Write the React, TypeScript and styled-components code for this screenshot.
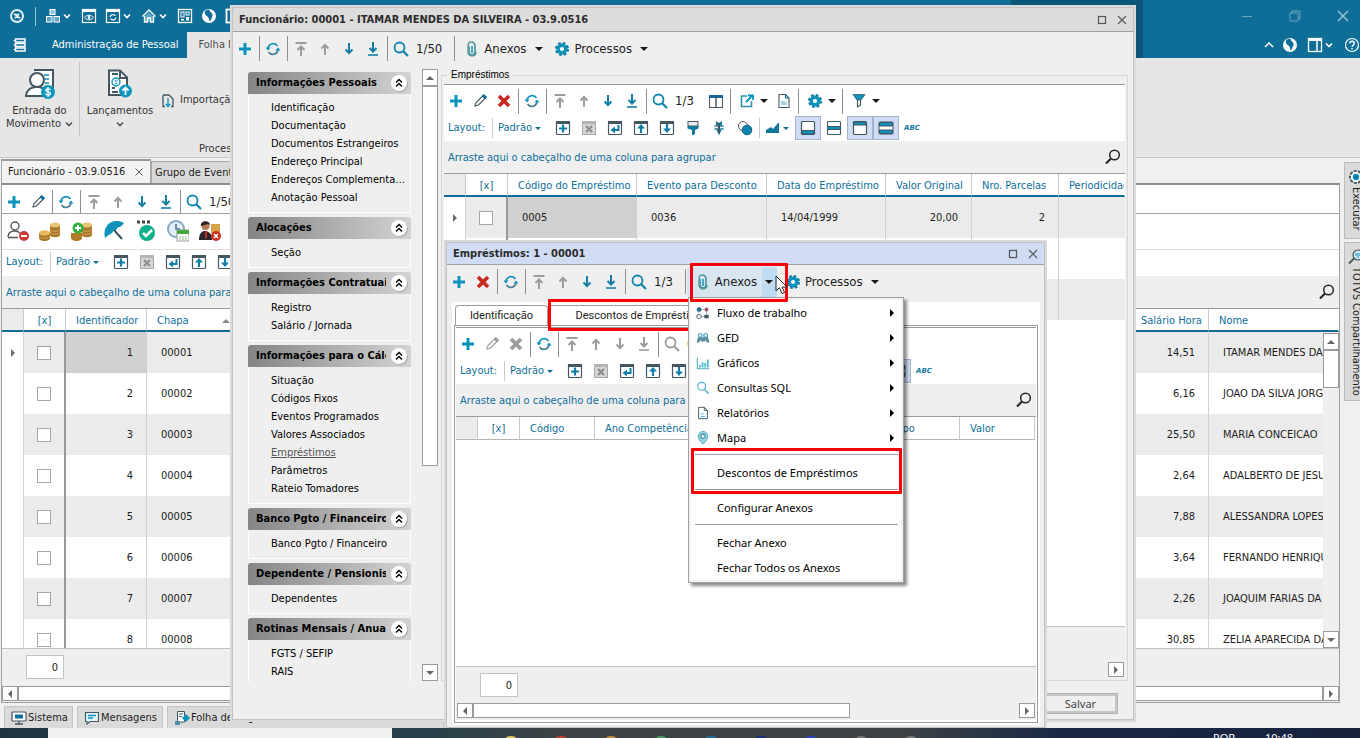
import React, { ReactNode } from 'react';
import styled, { createGlobalStyle, css } from 'styled-components';

const ui = '"DejaVu Sans Condensed", Tahoma, "Noto Sans", sans-serif';
const segoe = '"Noto Sans", "Open Sans", sans-serif';
const sans = '"Liberation Sans", Arial, sans-serif';
const blue = '#0e6e98';
const teal = '#0c93bd';
const slate = '#44565f';
const mute = '#9c9c9c';

const Global = createGlobalStyle`
  *, *::before, *::after { box-sizing: border-box; }
  html, body { margin: 0; padding: 0; }
  body { font: 11px/16px ${ui}; color: #1c1c1c; background: #f0f0f0; overflow: hidden; }
  button { font: inherit; color: inherit; background: none; border: 0; padding: 0; margin: 0; }
  ul { list-style: none; margin: 0; padding: 0; }
  svg { display: block; flex: none; }
`;

/* ---------- icons ---------- */

const P = ({ d, c = slate, w = 1.5, f = 'none' }: { d: string; c?: string; w?: number; f?: string }) => (
  <path d={d} stroke={c} strokeWidth={w} fill={f} />
);
const frame = <rect x="1.5" y="1.5" width="13" height="13" rx="1" fill="#fff" stroke={slate} strokeWidth="1.2" />;
const frameTop = <path d="M1 1h14v3H1z" fill={slate} />;

const down = (c: string) => <P d="M8 2v10M4.5 8.500L8 12l3.500-3.500" c={c} w={2} />;
const up = (c: string) => <P d="M8 14V4M4.500 7.500L8 4l3.500 3.500" c={c} w={2} />;

const drawings: Record<string, ReactNode> = {
  plus: <P d="M8 2v12M2 8h12" c={teal} w={3} />,
  pencil: <><P d="M3 13l1-3.500 6.500-6.500 2.500 2.500L6.500 12z" w={1.1} f="#fff" /><P d="M10 3l2-1.500 2.500 2.500-1.500 2z" c={blue} w={1} f={blue} /></>,
  pencilOff: <><P d="M3 13l1-3.500 6.500-6.500 2.500 2.500L6.500 12z" c={mute} w={1.2} /><P d="M10 3l2-1.500 2.500 2.500-1.500 2z" c={mute} w={1} f={mute} /></>,
  del: <P d="M3 3l10 10M13 3L3 13" c="#c8281e" w={3.600} />,
  delOff: <P d="M3 3l10 10M13 3L3 13" c={mute} w={3.600} />,
  refresh: <><P d="M3 7a5.200 5.200 0 0 1 9.500-2" c={teal} w={1.600} /><P d="M13 9a5.200 5.200 0 0 1-9.500 2" c="#4d7f90" w={1.600} /><path d="M.5 6.500h5L3 9.500zM10.500 9.500h5L13 6.500z" fill={teal} /></>,
  first: <><P d="M2.500 2h11" c={mute} w={2} /><P d="M8 15V5.500M4.500 9L8 5.500 11.500 9" c={mute} w={2} /></>,
  up: up(mute),
  down: down('#137fa6'),
  last: <><P d="M8 1v9M4.500 7L8 10.500 11.500 7" c="#137fa6" w={2} /><P d="M3 14h10" c="#137fa6" w={1.600} /></>,
  downOff: down(mute),
  lastOff: <><P d="M8 1v9M4.500 7L8 10.500 11.500 7" c={mute} w={2} /><P d="M3 14h10" c={mute} w={1.600} /></>,
  search: <><circle cx="6.500" cy="6.500" r="5" fill="none" stroke="#0f86ad" strokeWidth="1.800" /><P d="M10 10l5 5" c="#0f86ad" w={2.200} /></>,
  searchOff: <><circle cx="6.500" cy="6.500" r="5" fill="none" stroke={mute} strokeWidth="1.800" /><P d="M10 10l5 5" c={mute} w={2.200} /></>,
  columns: <><rect x="1.500" y="2.500" width="13" height="12" fill="#fff" stroke={slate} /><path d="M1 2h14v3H1z" fill={blue} /><P d="M8 2v12" w={1.400} /></>,
  export: <><P d="M8 3H2.500v10.500h10V8" c="#2f93a8" w={1.600} /><P d="M7 9l6-6M9 2.500h5V7" c={teal} w={1.800} /></>,
  report: <><P d="M3 1.500h6.500L13 5v9.500H3z" w={1.100} f="#fff" /><P d="M9.500 1.500V5H13" c={blue} w={1.100} /><path d="M5 8h4v1h2v3H5z" fill="#a5d3de" /></>,
  gear: <><circle cx="8" cy="8" r="3.800" fill="none" stroke={teal} strokeWidth="3.400" /><circle cx="8" cy="8" r="6" fill="none" stroke="#1580a5" strokeWidth="2.200" strokeDasharray="2.700 2.010" /><circle cx="8" cy="8" r="1.400" fill="#fff" /></>,
  filter: <><path d="M2 1.500h12L10 7H6z" fill={teal} stroke={slate} strokeWidth=".8" /><P d="M6.500 7v7l3-2V7" w={1.200} /></>,
  clip: <><P d="M5 5v6a3 3 0 0 0 6 0V4.500a3.500 3.500 0 0 0-3.500-3.500" c="#3d8b94" w={1.500} /><P d="M7.500 1C5 1 4 3 4 5v6a4 4 0 0 0 4 4c3 0 4-2 4-4" c="#4b9a94" w={1.300} /><P d="M8 5v7" c={teal} w={1.500} /></>,
  layAdd: <>{frame}{frameTop}<P d="M8 4.500v8M4 8.500h8" c="#0f7fa8" w={2.200} /></>,
  layDel: <><rect x="1.500" y="1.500" width="13" height="13" fill="#d6d6d6" stroke="#a6a6a6" /><path d="M1 1h14v3H1z" fill="#b5b5b5" /><P d="M5 6l6 6M11 6l-6 6" c="#8c8c8c" w={2.200} /></>,
  layBack: <>{frame}{frameTop}<P d="M11.500 5v5H6" c="#0f7fa8" w={2} /><path d="M8 6.500v7L3.500 10z" fill="#0f7fa8" /></>,
  layUp: <>{frame}{frameTop}<P d="M8 13V6" c="#0f7fa8" w={2.200} /><path d="M4 8.500L8 4l4 4.500z" fill="#0f7fa8" /></>,
  layDown: <>{frame}{frameTop}<P d="M8 4v6" c="#0f7fa8" w={2.200} /><path d="M4 8.500L8 13l4-4.500z" fill="#0f7fa8" /></>,
  brush: <><rect x="3" y="1.500" width="10" height="4.500" fill="#eee" stroke={slate} /><path d="M2.500 6h11v2.500l-3.500 1.500v4l-3 1.500V10L2.500 8.500z" fill="#12799b" /></>,
  fit: <><path d="M5 1l3 2 3-2v4H5zM5.500 10h5L8 15.500z" fill="#12799b" /><P d="M3.500 6h9M3.500 9h9" c="#12799b" w={1.400} /><P d="M8 3v10" w={2} /></>,
  circles: <><circle cx="6" cy="6" r="4.500" fill="#fff" stroke={slate} /><circle cx="10" cy="10" r="4.800" fill="#0f84ad" stroke="#12627d" /></>,
  chart: <path d="M1 13V10l5-3 2 2 5-6h1v10z" fill="#12799b" />,
  viewFoot: <>{frame}<path d="M2 10.500h12V14H2z" fill={teal} stroke={slate} /></>,
  viewMid: <>{frame}<path d="M1.500 6.500h13v3h-13z" fill={teal} stroke={slate} /></>,
  viewHead: <>{frame}<path d="M2 2h12v3H2z" fill={teal} stroke={slate} /></>,
  viewBoth: <><rect x="1" y="2" width="14" height="12" rx="1" fill="#fff" stroke={slate} /><path d="M1.500 2.500h13v3.500h-13zM1.500 10h13v3.500h-13z" fill={teal} stroke={slate} /></>,
  magnifier: <><circle cx="9.500" cy="6" r="4.800" fill="none" stroke="#262626" strokeWidth="1.500" /><P d="M6 9.500l-5 5" c="#262626" w={2.200} /></>,
  flow: <><P d="M3 5v7h9V5M5 4h6" c="#a5b3b9" w={1} /><circle cx="3.500" cy="4" r="2.700" fill="#2a6d8a" /><circle cx="12" cy="4" r="2.200" fill="#9c5563" /><rect x="1" y="10" width="5" height="4" rx="1" fill="#fff" stroke={slate} /><rect x="9.500" y="10" width="5" height="4" fill={slate} /></>,
  people: <><path d="M1 13c0-5 2-7 4-7 1.500 0 2.500 1 3 2 .5-1 1.500-2 3-2 2 0 4 2 4 7h-3l-.7-3-1 2H5.700l-1-2L4 13z" fill="#5f8d9c" /><circle cx="5" cy="5" r="2.200" fill="#e2f4f9" stroke="#3fa2bd" strokeWidth="1.200" /><circle cx="11" cy="5" r="2.200" fill="#e2f4f9" stroke="#3fa2bd" strokeWidth="1.200" /></>,
  bars: <><P d="M1.500 2v12.500H15" c="#58a9bd" w={1.200} /><P d="M4.500 10v3M7.500 7v6M10.500 8v5M13.500 4v9" c="#4ebcd6" w={2} /></>,
  find: <><circle cx="6.500" cy="6" r="4.500" fill="none" stroke="#45b2cf" strokeWidth="1.300" /><P d="M9.500 9.500l5 5" c="#45b2cf" w={1.600} /></>,
  sheet: <><P d="M3 1.500h6.500L13 5v9.500H3z" w={1.100} f="#fff" /><P d="M9.500 1.500V5H13" w={1.100} /><P d="M5.500 9h3M5.500 12h5" c="#55bfe0" w={1.300} /></>,
  pin: <><path d="M8 15C4 11 2.500 9 2.500 6a5.500 5.500 0 0 1 11 0c0 3-1.500 5-5.500 9z" fill="#9bd3de" stroke="#4ba9bf" /><circle cx="8" cy="6" r="2.500" fill="#fff" stroke="#3793ad" strokeWidth="1.300" /></>,
  /* white icons of the caption area */
  swirl: <><circle cx="8" cy="8" r="6" fill="none" stroke="#dceef5" strokeWidth="2" /><P d="M5 6l3 1.500 2-1.500M6 10l2-1.500 3 1.500" c="#fff" w={1.800} /></>,
  cubes: <><rect x="5" y="1.500" width="5" height="5" fill="#8fc4d8" stroke="#fff" /><rect x="1.500" y="8.500" width="5.500" height="5.500" fill="#5aa8c4" stroke="#fff" /><rect x="9" y="8.500" width="5.500" height="5.500" fill="#5aa8c4" stroke="#fff" /></>,
  winEye: <><rect x="1.500" y="1.500" width="13" height="13" fill="none" stroke="#fff" strokeWidth="1.200" /><path d="M1 1h14v3H1z" fill="#fff" /><P d="M3.500 9.500c2-3 7-3 9 0-2 3-7 3-9 0z" c="#fff" w={1} /><circle cx="8" cy="9.500" r="1.400" fill="#fff" /></>,
  winRef: <><rect x="1.500" y="1.500" width="13" height="13" fill="none" stroke="#fff" strokeWidth="1.200" /><path d="M1 1h14v3H1z" fill="#fff" /><P d="M5 9a3 3 0 0 1 5.500-1M11 9.500a3 3 0 0 1-5.500 1" c="#fff" w={1.300} /></>,
  home: <><path d="M4 8v6h8V8L8 4z" fill="#5aa8c4" /><P d="M1.500 8.500L8 2l6.500 6.500M3.500 8V14h3v-4h3v4h3V8" c="#fff" w={1.300} /></>,
  tiles: <><rect x="1.500" y="1.500" width="13" height="13" fill="none" stroke="#fff" strokeWidth="1.300" /><rect x="4" y="4" width="3" height="5" fill="none" stroke="#fff" /><rect x="9" y="4" width="3" height="3" fill="none" stroke="#fff" /><rect x="4" y="11" width="3" height="1.500" fill="#fff" /><rect x="9" y="9" width="3" height="3.500" fill="#fff" /></>,
  globe: <><circle cx="8" cy="8" r="7" fill="#fff" /><path d="M4 3.500C5 2 7 1.500 8.500 2c0 2 2.500 2.500 3 4.500S10 11 9 13.500c-1.500-1-.5-3-2-4.500S3 6.500 4 3.500z" fill={blue} /></>,
  winCfg: <rect x="1.500" y="1.500" width="13" height="13" fill="none" stroke="#fff" strokeWidth="1.800" />,
  stack: <><rect x="3.500" y="2" width="9.500" height="3" fill="none" stroke="#fff" strokeWidth="1.500" /><rect x="3.500" y="6.500" width="9.500" height="3" fill="none" stroke="#fff" strokeWidth="1.500" /><rect x="3.500" y="11" width="9.500" height="3" fill="none" stroke="#fff" strokeWidth="1.500" /><P d="M1.500 3.500H4M1.500 8H4M1.500 12.500H4" c="#fff" w={1.200} /></>,
  collapse: <P d="M4 10l4-4 4 4" c="#fff" w={1.500} />,
  panel: <><rect x="1.500" y="1.500" width="13" height="13" fill="none" stroke="#fff" strokeWidth="1.300" /><path d="M1 1h14v3H1z" fill="#fff" /><path d="M10 4v10" stroke="#fff" strokeWidth="1.500" /></>,
  help: <><circle cx="8" cy="8" r="6.500" fill="none" stroke="#fff" strokeWidth="1.200" /><P d="M5.800 6.500c0-3 4.500-3 4.500 0 0 1.500-2.200 1.500-2.200 3.500M8 11v1.500" c="#fff" w={1.400} /></>,
  winMin: <P d="M3 8.500h10" c="#6ba6be" w={1} />,
  winRestore: <><P d="M5 5V3h8v8h-2" c="#6ba6be" w={1} /><P d="M3 5h8v8H3z" c="#6ba6be" w={1} /></>,
  winClose: <P d="M3 3l10 10M13 3L3 13" c="#a9cbd9" w={1.200} />,
  boxMax: <rect x="4.500" y="4.500" width="7" height="7" fill="none" stroke="#555" strokeWidth="1.200" />,
  boxClose: <P d="M4 4l8 8M12 4l-8 8" c="#555" w={1.100} />,
  importar: <><P d="M3 3v11.500h2M3 3h6l4 4v7.500h-2" w={1.300} /><P d="M8 6v8M5.800 12L8 14.500l2.200-2.500" c={teal} w={1.300} /></>,
  /* bottom and side tabs */
  monitor: <><rect x="1" y="2" width="14" height="9" rx="1" fill="#fff" stroke={slate} strokeWidth="1.200" /><path d="M4 4.500h8v4H4z" fill={blue} /><P d="M8 11v3M4 14h8" w={1.300} /></>,
  message: <><P d="M1.500 2.500h13v9H6L3 14v-2.500H1.500z" f="#dff2f8" w={1.100} /><P d="M4 5.500h8M4 8h5" c={teal} w={1.300} /></>,
  payroll: <><P d="M3.500 1.500h7V12h-7z" f="#fff" w={1} /><P d="M5 4h4M5 6.500h3" w={1} /><path d="M12 4l4 4-4 4-4-4z" fill={teal} /><path d="M1 11h5v4H1z" fill="#4d93a8" /></>,
  exec: <><circle cx="8" cy="8" r="6" fill="#fff" stroke={slate} strokeWidth="2" strokeDasharray="3 1.200" /><circle cx="8" cy="8" r="2.500" fill={blue} stroke={teal} strokeWidth="1.500" /></>,
  share: <><circle cx="10" cy="6" r="5" fill="#cfeaf3" stroke={slate} strokeWidth="1.200" /><P d="M6 9.500l-5 5" w={1.800} /><P d="M8 4v3M10 4v5M12 4v3" c={teal} w={1} /></>,
};

const Icon = ({ name, size = 16 }: { name: string; size?: number }) => (
  <svg width={size} height={size} viewBox="0 0 16 16" aria-hidden="true">{drawings[name]}</svg>
);

const Caret = styled.span<{ $tone?: string }>`
  width: 0; height: 0; flex: none;
  border: 4px solid transparent; border-bottom-width: 0;
  border-top-color: ${p => p.$tone || '#1a1a1a'};
`;
const SmallCaret = styled(Caret)`border-width: 3px 3px 0;`;
const Chevron = ({ color = '#fff' }: { color?: string }) => (
  <svg width="8" height="8" viewBox="0 0 8 8" aria-hidden="true"><path d="M1 2.500l3 3 3-3" stroke={color} strokeWidth="1.600" fill="none" /></svg>
);

/* ---------- application frame ---------- */

const Desktop = styled.div`
  position: relative; height: 100vh; overflow: hidden;
  display: flex; flex-direction: column; background: #f0f0f0;
`;
const Header = styled.header`
  flex: none; color: #fff;
  background: linear-gradient(to right, ${blue} calc(100% - 349px), #0b5677 calc(100% - 349px), #0b5677 calc(100% - 217px), ${blue} calc(100% - 217px));
`;
const QuickBar = styled.div`display: flex; align-items: center; height: 32px; padding: 0 9px;`;
const Quick = styled.button`
  display: flex; align-items: center; justify-content: center; width: 24px; height: 24px; flex: none;
`;
const QuickMenu = styled(Quick)`justify-content: flex-start; gap: 2px; width: 36px; padding-left: 4px;`;
const Logo = styled(Quick)`width: 16px;`;
const QuickLine = styled.span`width: 1px; height: 19px; margin: 0 5px 0 10px; background: #9cc4d4;`;
const Spacer = styled.span`flex: 1;`;
const Caption = styled(Quick)`width: 48px;`;
const CaptionSet = styled.div`display: flex; margin-right: -16px;`;
const RibbonTabs = styled.nav`display: flex; align-items: center; height: 26px; padding-left: 12px;`;
const AppMenu = styled(Logo)`margin-right: 12px;`;
const RibbonTab = styled.button<{ $on?: boolean }>`
  height: 26px; padding: 0 8px 0 12px; white-space: nowrap;
  ${p => p.$on && css`background: #e6e6e6; color: #4d4d4d;`}
`;
const TabTools = styled.div`display: flex; gap: 5px; align-items: center;`;

const Ribbon = styled.section`
  display: flex; flex: none; height: 100px; background: #e6e6e6; border-bottom: 1px solid #c8c8c8; color: #333;
`;
const RibbonGroup = styled.div`display: flex; padding-top: 4px; height: 80px;`;
const RibbonButton = styled.button<{ $w: number }>`
  display: flex; flex-direction: column; align-items: center; width: ${p => p.$w}px;
  line-height: 13px; padding-top: 6px;
  svg + span { margin-top: 4px; }
`;
const Inline = styled.span`display: flex; gap: 4px; align-items: center; height: 13px;`;
const RibbonLine = styled.span`width: 1px; height: 74px; background: #c4c4c4; margin-top: 4px;`;
const RibbonMore = styled.div`
  display: flex; flex-direction: column; justify-content: space-between; padding: 34px 0 0 0; height: 99px;
`;
const RibbonItem = styled.button`display: flex; gap: 4px; align-items: center; height: 16px;`;
const RibbonLabel = styled.span`padding-left: 39px;`;

const Workspace = styled.main`flex: 1; min-height: 0; display: flex; gap: 4px; padding-left: 1px;`;
const DocArea = styled.section`flex: 1; min-width: 0; display: flex; flex-direction: column;`;
const DocTabs = styled.div`display: flex; align-items: flex-end; height: 25px; flex: none;`;
const DocTab = styled.button<{ $on?: boolean }>`
  display: flex; align-items: center; gap: 7px; white-space: nowrap; height: ${p => (p.$on ? 24 : 22)}px;
  padding: 0 3px; border: 1px solid #a8a8a8; border-bottom: 0; background: ${p => (p.$on ? '#f2f2f2' : '#d9d9d9')};
  ${p => p.$on && css`width: 150px; padding-left: 6px; border-top: 2px solid #999;`}
`;
const DocPanel = styled.div`
  flex: 1; min-height: 0; display: flex; flex-direction: column;
  border: 1px solid #a0a0a0; border-top: 2px solid #8c8c8c;
`;

const SideTabs = styled.aside`width: 16px; padding-top: 4px; display: flex; flex-direction: column; gap: 3px; overflow: hidden;`;
const SideTab = styled.button<{ $h: number }>`
  writing-mode: vertical-rl; display: flex; align-items: center; gap: 2px; padding-top: 6px; white-space: nowrap;
  width: 23px; height: ${p => p.$h}px; background: #dadada; border: 1px solid #bcbcbc; flex: none;
`;

const BottomTabs = styled.nav`display: flex; flex: none; gap: 4px; height: 25px; padding: 3px 0 0 4px;`;
const BottomTab = styled.button<{ $w: number }>`
  display: flex; align-items: center; gap: 1px; width: ${p => p.$w}px; padding-left: 6px;
  background: #dadada; border: 1px solid #c4c4c4; border-bottom: 0; white-space: nowrap; overflow: hidden;
`;

const Taskbar = styled.footer`
  position: relative; z-index: 5; flex: none; height: 10px; overflow: hidden; display: flex; align-items: flex-start; padding-right: 43px;
  color: #fff; background: linear-gradient(to right, #1f3640 0, #24414c 400px, #3d4245 560px, #3d4245 900px, #1a2845 1060px, #17233d);
`;
const TaskSearch = styled.div`width: 344px; height: 10px; margin-left: 48px; background: #f1f1f1;`;
const TaskApps = styled.div`display: flex; flex: 1; padding: 8px 0 0 112px; gap: 36px;`;
const TaskApp = styled.span<{ $c: string }>`width: 14px; height: 12px; border-radius: 6px 6px 0 0; background: ${p => p.$c};`;
const TaskText = styled.span`padding-top: 3px; line-height: 13px; width: 52px; font-family: ${segoe};`;

/* ---------- toolbars ---------- */

const Bar = styled.div<{ $tall?: boolean }>`
  display: flex; align-items: center; flex: none; height: ${p => (p.$tall ? 33 : 32)}px; overflow: hidden;
`;
const Tool = styled.button`width: 24px; height: 24px; flex: none; display: flex; align-items: center; justify-content: center;`;
const ToolLine = styled.span`width: 1px; height: 25px; flex: none; margin: 0 1px 0 2px; background: #8e8e8e;`;
const Counter = styled.span`font-size: 13px; padding: 0 10px 0 3px; white-space: nowrap;`;
const Split = styled.button`
  display: flex; align-items: center; gap: 5px; flex: none; width: 40px; padding-left: 7px; height: 24px;
`;
const MenuTool = styled.button<{ $on?: boolean }>`
  display: flex; align-items: stretch; height: 30px; flex: none; font-size: 13px;
  background: ${p => (p.$on ? '#d8e6f1' : 'none')};
`;
const MenuToolText = styled.span`display: flex; align-items: center; gap: 4px; padding-left: 8px;`;
const MenuToolCaret = styled.span<{ $on?: boolean }>`
  display: flex; align-items: center; justify-content: center; width: 15px; margin-left: 5px;
  background: ${p => (p.$on ? '#bfdcf2' : 'none')};
`;

const tools = (names: string) =>
  names.split(' ').map((n, i) => (n === '|' ? <ToolLine key={i} /> : <Tool key={i} aria-label={n}><Icon name={n} /></Tool>));
const Dropdown = ({ icon }: { icon: string }) => <Split aria-label={icon}><Icon name={icon} /><Caret /></Split>;
const MenuButton = ({ icon, label, on }: { icon: string; label: string; on?: boolean }) => (
  <MenuTool $on={on}>
    <MenuToolText><Icon name={icon} />{label}</MenuToolText>
    <MenuToolCaret $on={on}><Caret /></MenuToolCaret>
  </MenuTool>
);

const LayoutRow = styled.div<{ $h?: number }>`
  display: flex; align-items: center; flex: none; height: ${p => p.$h || 24}px; padding: 0 0 2px 4px;
  background: #fff; color: ${blue};
`;
const LayoutLabel = styled.span`width: 45px; flex: none; border-right: 1px solid #c9c9c9; line-height: 20px;`;
const LayoutPick = styled.button`display: flex; align-items: center; gap: 3px; width: 57px; padding-left: 5px; flex: none;`;
const LayoutTool = styled.button<{ $on?: boolean }>`
  width: 26px; height: 24px; flex: none; display: flex; align-items: center; justify-content: center;
  ${p => p.$on && css`background: #cfdcf4; border: 1px solid #a5b3cf;`}
`;
const LayoutLine = styled.span`width: 1px; height: 20px; margin: 0 3px 0 1px; background: #c9c9c9; flex: none;`;
const ChartPick = styled.button`display: flex; align-items: center; gap: 2px; width: 32px; padding-left: 2px; flex: none;`;
const Abc = styled.button`width: 26px; font: italic 900 7px/10px "DejaVu Sans", sans-serif; color: #12799b; flex: none;`;

const LayoutBar = ({ h }: { h?: number }) => (
  <LayoutRow $h={h}>
    <LayoutLabel>Layout:</LayoutLabel>
    <LayoutPick>Padrão<SmallCaret $tone={blue} /></LayoutPick>
    {'layAdd layDel layBack layUp layDown brush fit circles'.split(' ').map(n => <LayoutTool key={n} aria-label={n}><Icon name={n} /></LayoutTool>)}
    <LayoutLine />
    <ChartPick aria-label="chart"><Icon name="chart" /><SmallCaret $tone={blue} /></ChartPick>
    <LayoutTool $on aria-label="footer"><Icon name="viewFoot" /></LayoutTool>
    <LayoutTool aria-label="middle"><Icon name="viewMid" /></LayoutTool>
    <LayoutTool $on aria-label="header"><Icon name="viewHead" /></LayoutTool>
    <LayoutTool $on aria-label="both"><Icon name="viewBoth" /></LayoutTool>
    <Abc>ABC</Abc>
  </LayoutRow>
);

const GroupRow = styled.div`
  display: flex; align-items: center; justify-content: space-between; flex: none; height: 32px;
  padding: 2px 4px 0; background: #efefef; color: ${blue}; white-space: nowrap;
  svg { margin-bottom: 2px; }
`;
const GroupBar = () => <GroupRow><span>Arraste aqui o cabeçalho de uma coluna para agrupar</span><Icon name="magnifier" /></GroupRow>;

/* ---------- data grid ---------- */

const TableArea = styled.div`position: relative; flex: 1; min-height: 0; overflow: hidden; background: #fff; border-top: 1px solid #9c9c9c;`;
const Table = styled.table<{ $plain?: boolean }>`
  width: 100%; table-layout: fixed; border-collapse: separate; border-spacing: 0;
  th {
    height: 23px; padding: 2px 0 0 10px; font-weight: 400; color: ${blue}; text-align: left;
    white-space: nowrap; overflow: hidden; border-right: 1px solid #c9c9c9;
    border-bottom: ${p => (p.$plain ? '1px solid #b4b4b4' : `2px solid ${blue}`)};
  }
  th:first-child { background: #ebebeb; }
  th:last-child { border-right-color: ${p => (p.$plain ? '#c9c9c9' : 'transparent')}; }
  th:nth-child(2) { padding: 2px 0 0; text-align: center; }
`;
const Row = styled.tr`
  background: #fff;
  &:nth-child(odd) { background: #ebebeb; }
`;
const Cell = styled.td<{ $right?: boolean; $focus?: boolean; $split?: boolean }>`
  height: 41px; padding: 0 13px 0 14px; white-space: nowrap; overflow: hidden;
  text-align: ${p => (p.$right ? 'right' : 'left')};
  border-right: ${p => (p.$split ? '2px solid #999' : '1px solid #d2d2d2')};
  ${p => p.$split && css`padding: 0; text-align: center;`}
  ${p => p.$focus && css`background: #d0d0d0;`}
  &:first-child { background: #fff; padding: 0; }
  &:last-child { border-right: 0; }
`;
const Pointer = styled.span`
  display: block; margin-left: 9px; width: 0; height: 0; border: 4px solid transparent; border-left-color: #6e6e6e; border-right-width: 0;
`;
const Check = styled.input`
  appearance: none; display: block; width: 14px; height: 14px; margin: 0 auto; background: #fff; border: 1px solid #a6a6a6;
`;
const HeadFlex = styled.span`display: flex; align-items: center; justify-content: space-between; padding-right: 8px;`;
const SortUp = styled.span`border: 4px solid transparent; border-top-width: 0; border-bottom-color: #888;`;

type Col = { w?: number; label: string; right?: boolean; sort?: boolean };
const Grid = ({ cols, rows, plain }: { cols: Col[]; rows: string[][]; plain?: boolean }) => (
  <Table $plain={plain}>
    <colgroup>
      <col width="22" /><col width="42" />
      {cols.map((c, i) => <col key={i} width={c.w} />)}
    </colgroup>
    <thead>
      <tr>
        <th aria-label="Linha" /><th>[x]</th>
        {cols.map((c, i) => <th key={i}>{c.sort ? <HeadFlex>{c.label}<SortUp /></HeadFlex> : c.label}</th>)}
      </tr>
    </thead>
    <tbody>
      {rows.map((r, i) => (
        <Row key={i}>
          <Cell>{i === 0 && <Pointer />}</Cell>
          <Cell $split><Check type="checkbox" aria-label={`Selecionar linha ${i + 1}`} /></Cell>
          {cols.map((c, j) => <Cell key={j} $right={c.right} $focus={i === 0 && j === 0}>{r[j]}</Cell>)}
        </Row>
      ))}
    </tbody>
  </Table>
);

const GridFoot = styled.div<{ $h: number }>`flex: none; height: ${p => p.$h}px; padding: 6px 0 0 24px; border-top: 1px solid #c0c0c0; background: #efefef;`;
const Total = styled.output`
  display: block; width: 38px; height: 24px; padding-right: 5px; line-height: 24px; text-align: right; background: #fff; border: 1px solid #c4c4c4;
`;
const HScroll = styled.div`display: flex; flex: none; height: 16px; background: #efefef;`;
const ScrollKey = styled.button<{ $v?: boolean }>`
  flex: none; width: 16px; height: ${p => (p.$v ? 17 : 15)}px; background: #fff; border: 1px solid #9a9a9a;
  display: flex; align-items: center; justify-content: center;
`;
const Arrow = styled.span<{ $to: 'left' | 'right' | 'up' | 'down'; $c?: string }>`
  width: 0; height: 0; border: 4px solid transparent;
  ${p => `border-${({ left: 'right', right: 'left', up: 'bottom', down: 'top' } as const)[p.$to]}-color: ${p.$c || '#666'}; border-${p.$to === 'up' ? 'top' : p.$to === 'down' ? 'bottom' : p.$to}-width: 0;`}
`;
const HThumb = styled.div<{ $w?: number }>`
  height: 15px; background: #fff; border: 1px solid #9a9a9a; ${p => (p.$w ? `width: ${p.$w}px; margin-right: auto;` : 'flex: 1;')}
`;
const VScroll = styled.div`display: flex; flex-direction: column; width: 16px; background: #efefef;`;
const VThumb = styled.div<{ $h: number }>`height: ${p => p.$h}px; margin-bottom: auto; background: #fff; border: 1px solid #9a9a9a;`;
const MainScroll = styled(VScroll)`position: absolute; right: 0; top: 24px; bottom: 0;`;

const MainTools = styled.div`height: 29px; padding-top: 1px; flex: none; background: #fff; border-bottom: 1px solid #a0a0a0;`;
const AppTools = styled.div`display: flex; align-items: center; gap: 10px; height: 36px; padding: 0 0 1px 5px; background: #fff; border-bottom: 1px solid #dedede; flex: none;`;
const AppTool = styled.button`width: 22px; height: 24px; flex: none;`;

const appIcons: ReactNode[] = [
  <><circle cx="8" cy="6" r="4" fill="#fff" stroke="#555" strokeWidth="1.400" /><path d="M1 17c0-5 4-6 7-6 2 0 4 1 5 2M1 17.500h10" fill="none" stroke="#555" strokeWidth="1.400" /><circle cx="17" cy="16" r="5" fill="#c93a34" /><path d="M14 16h6" stroke="#fff" strokeWidth="2" /></>,
  <><path d="M0 13v5c0 4 11 4 11 0v-5" fill="#a8752a" /><path d="M0 16c0 3 11 3 11 0" stroke="#d9a850" fill="none" /><ellipse cx="5.500" cy="13" rx="5.500" ry="2.800" fill="#e7b95a" /><path d="M11 5v10c0 3 10 3 10 0V5" fill="#a8752a" /><path d="M11 9c0 3 10 3 10 0M11 12c0 3 10 3 10 0" stroke="#d9a850" fill="none" /><ellipse cx="16" cy="5" rx="5" ry="2.500" fill="#eac576" /></>,
  <><path d="M0 13v5c0 4 11 4 11 0v-5" fill="#b07a28" /><path d="M11 5v10c0 3 10 3 10 0V5" fill="#a8752a" /><path d="M11 9c0 3 10 3 10 0M11 12c0 3 10 3 10 0" stroke="#d9a850" fill="none" /><ellipse cx="16" cy="5" rx="5" ry="2.500" fill="#eac576" /><circle cx="7" cy="8" r="5.500" fill="#34b03a" /><path d="M7 5v6M4 8h6" stroke="#fff" strokeWidth="2" /></>,
  <><path d="M2 18C-1 6 9-3 21 3c-1 1-2 3-4 4-2-.5-3 1-4 3-2 0-3 1-4 3-2 1-5 3-7 5z" fill="#0f93ba" /><path d="M11 10l8 9" stroke="#35565f" strokeWidth="2" /></>,
  <><path d="M2 2h3M7 2h3M12 2h3" stroke="#444" strokeWidth="3" /><circle cx="12" cy="13" r="8" fill="#10b08c" /><path d="M8 13l3 3 6-6" stroke="#fff" strokeWidth="2.500" fill="none" /></>,
  <><circle cx="9" cy="9" r="8" fill="#e6eff6" stroke="#8ba9c1" strokeWidth="2" /><path d="M9 4v5h4" stroke="#3b6d95" strokeWidth="1.500" fill="none" /><rect x="10" y="10" width="12" height="11" fill="#fff" stroke="#999" /><path d="M10 10h12v4H10z" fill="#46a93b" /><path d="M12 17h8M12 19h8" stroke="#8bc183" strokeDasharray="2 1" /></>,
  <><path d="M12 4h9v9h-9z" fill="#d7a347" /><circle cx="6.500" cy="6" r="4" fill="#b67a58" /><path d="M2 6c-1-6 9-6 9-1L9 4z" fill="#2b201b" /><path d="M0 20c0-7 3-9 6-9s7 2 7 9z" fill="#26262b" /><path d="M6 11l2 0 0 7-1 1-1-1z" fill="#cc2b22" /><circle cx="17" cy="16" r="5" fill="#cf2e26" /><path d="M15 14l4 4M19 14l-4 4" stroke="#fff" strokeWidth="1.600" /></>,
];

/* ---------- floating windows ---------- */

const Win = styled.section<{ $x: number; $y: number; $w: number; $h: number; $z: number }>`
  position: absolute; left: ${p => p.$x}px; top: ${p => p.$y}px; width: ${p => p.$w}px; height: ${p => p.$h}px; z-index: ${p => p.$z};
  display: flex; border: 2px solid #dadada; background: #efefef;
`;
const WinInner = styled.div`flex: 1; min-width: 0; display: flex; flex-direction: column; border: 1px solid #c2c2c2;`;
const WinTitle = styled.header<{ $active?: boolean }>`
  display: flex; align-items: center; justify-content: space-between; flex: none; height: ${p => (p.$active ? 22 : 24)}px; padding: 0 3px 0 6px;
  background: ${p => (p.$active ? '#cfdcf4' : '#dcdcdc')}; border-bottom: 1px solid #a0a0a0;
`;
const WinName = styled.h2`margin: 0; font-size: 11px; font-weight: 700; color: #2b2b2b;`;
const WinKeys = styled.div`display: flex; gap: 4px;`;
const WinHead = ({ title, active }: { title: string; active?: boolean }) => (
  <WinTitle $active={active}>
    <WinName>{title}</WinName>
    <WinKeys><button aria-label="Maximizar"><Icon name="boxMax" /></button><button aria-label="Fechar"><Icon name="boxClose" /></button></WinKeys>
  </WinTitle>
);

const WinBody = styled.div`flex: 1; min-height: 0; display: flex; padding: 3px 5px 0 15px;`;
const Nav = styled.nav`width: 163px; height: 610px; flex: none; margin: 4px 11px 0 0; display: flex; flex-direction: column; gap: 4px; overflow: hidden;`;
const NavGroup = styled.section`flex: none;`;
const NavTitle = styled.button`
  display: flex; align-items: center; justify-content: space-between; width: 100%; height: 22px; padding: 0 4px 0 8px;
  font-weight: 700; color: #000; border-radius: 3px 3px 0 0; background: linear-gradient(to right, #858585, #d3d3d3);
`;
const NavTitleText = styled.span`width: 130px; text-align: left; white-space: nowrap; overflow: hidden;`;
const Puck = styled.span`width: 16px; height: 16px; border-radius: 50%; background: #fff; box-shadow: 1px 1px 1px #aaa;`;
const NavList = styled.ul`padding: 5px 0; border: 1px solid #fff; border-top: 0;`;
const NavItem = styled.li`height: 18px; line-height: 18px; padding-left: 22px; white-space: nowrap;`;
const NavLink = styled.a<{ $on?: boolean }>`
  display: block; width: 136px; overflow: hidden; text-overflow: ellipsis;
  color: ${p => (p.$on ? '#555' : '#000')}; text-decoration: ${p => (p.$on ? 'underline' : 'none')};
`;
const NavScroll = styled(VScroll)`height: 612px; margin: 1px 3px 0 0;`;

const Side = styled.div`flex: 1; min-width: 0; display: flex; flex-direction: column;`;
const Field = styled.fieldset`min-width: 0; margin: 0; padding: 2px 2px 3px; border: 1px solid #d6d6d6;`;
const Legend = styled.legend`font: 10px/14px ${sans}; padding: 0 4px; margin-left: 3px; color: #000;`;
const GridBox = styled.div`flex: 1; min-height: 0; display: flex; flex-direction: column; border-top: 1px solid #999; background: #fff;`;
const FieldGrid = styled(GridBox)`height: 593px;`;
const PlainFoot = styled.div`height: 51px; flex: none; display: flex; align-items: flex-end; justify-content: flex-end; background: #efefef; border-top: 1px solid #c0c0c0; padding: 0 1px;`;
const Actions = styled.div`display: flex; justify-content: flex-end; padding: 12px 10px 0;`;
const Save = styled.button`
  width: 75px; height: 21px; border: 3px solid #c6c6c6; outline: 1px solid #b4b4b4; outline-offset: -1px; color: #444; background: #efefef;
  font-family: ${segoe}; line-height: 14px;
`;

const TabPad = styled.div`flex: 1; min-height: 0; margin: 4px 4px 2px 5px; padding: 3px 2px 2px; background: #fff; display: flex; flex-direction: column;`;
const TabRow = styled.div`display: flex; height: 20px; flex: none; padding-left: 1px;`;
const PageTab = styled.button<{ $w: number }>`
  width: ${p => p.$w}px; border: 1px solid #9c9c9c; border-bottom: 0; border-radius: 4px 4px 0 0;
  font-family: Roboto, ${sans}; font-size: 11px; color: #222;
`;
const TabPage = styled.div`flex: 1; min-height: 0; display: flex; flex-direction: column; border: 1px solid #9c9c9c; padding: 1px 1px 2px;`;
const FootScroll = styled.div`background: #efefef; padding: 0 1px 1px;`;

const Menu = styled.ul`
  position: absolute; left: 688px; top: 297px; width: 216px; z-index: 6; padding: 2px; background: #fff;
  border: 1px solid #a0a0a0; box-shadow: 3px 3px 3px rgba(0, 0, 0, .45), inset 0 0 0 2px #f2f2f2;
  font-family: ${segoe}; color: #000;
`;
const MenuItem = styled.button`display: flex; align-items: center; width: 100%; height: 25px; padding: 0 7px 0 5px;`;
const MenuIcon = styled.span`width: 21px; svg { width: 14px; height: 14px; }`;
const MenuText = styled.span`flex: 1; text-align: left;`;
const MenuRule = styled.hr`height: 1px; border: 0; background: #a0a0a0; margin: 4px 3px 5px 4px;`;

const Mark = styled.div<{ $x: number; $y: number; $w: number; $h: number; $z: number }>`
  position: absolute; left: ${p => p.$x}px; top: ${p => p.$y}px; width: ${p => p.$w}px; height: ${p => p.$h}px; z-index: ${p => p.$z};
  border: 3px solid #fb0007; pointer-events: none; border-radius: 1px;
`;
const Cursor = styled.svg`position: absolute; left: 775px; top: 275px; z-index: 8;`;

/* ---------- data ---------- */

const navGroups: [string, string[]][] = [
  ['Informações Pessoais', ['Identificação', 'Documentação', 'Documentos Estrangeiros', 'Endereço Principal', 'Endereços Complementares', 'Anotação Pessoal']],
  ['Alocações', ['Seção']],
  ['Informações Contratuais', ['Registro', 'Salário / Jornada']],
  ['Informações para o Cálculo', ['Situação', 'Códigos Fixos', 'Eventos Programados', 'Valores Associados', 'Empréstimos', 'Parâmetros', 'Rateio Tomadores']],
  ['Banco Pgto / Financeiro', ['Banco Pgto / Financeiro']],
  ['Dependente / Pensionista', ['Dependentes']],
  ['Rotinas Mensais / Anuais', ['FGTS / SEFIP', 'RAIS']],
];
const mainCols: Col[] = [
  { w: 81, label: 'Identificador', right: true }, { w: 92, label: 'Chapa', sort: true }, { label: '' },
  { w: 78, label: 'Salário Hora', right: true }, { w: 130, label: 'Nome' },
];
const staff = [
  ['14,51', 'ITAMAR MENDES DA SILVEIRA'], ['6,16', 'JOAO DA SILVA JORGE'], ['25,50', 'MARIA CONCEICAO'], ['2,64', 'ADALBERTO DE JESUS'],
  ['7,88', 'ALESSANDRA LOPES'], ['3,64', 'FERNANDO HENRIQUE'], ['2,26', 'JOAQUIM FARIAS DA'], ['30,85', 'ZELIA APARECIDA DA'],
].map(([pay, name], i) => [String(i + 1), `0000${i + 1}`, '', pay, name]);
const loanCols: Col[] = [
  { w: 129, label: 'Código do Empréstimo' }, { w: 130, label: 'Evento para Desconto' }, { w: 119, label: 'Data do Empréstimo' },
  { w: 86, label: 'Valor Original', right: true }, { w: 87, label: 'Nro. Parcelas', right: true }, { label: 'Periodicidade' },
];
const loans = [['0005', '0036', '14/04/1999', '20,00', '2', ''], [], []];
const discountCols: Col[] = [
  { w: 75, label: 'Código' }, { w: 110, label: 'Ano Competência' }, { w: 179, label: '' }, { label: 'Tipo' }, { w: 75, label: 'Valor' },
];
const menuItems: [string, string][] = [['flow', 'Fluxo de trabalho'], ['people', 'GED'], ['bars', 'Gráficos'], ['find', 'Consultas SQL'], ['sheet', 'Relatórios'], ['pin', 'Mapa']];
const DiscountHolder = styled.div`padding-right: 1px;`;
const PlainItem = ({ children }: { children: ReactNode }) => <li><MenuItem><MenuIcon /><MenuText>{children}</MenuText></MenuItem></li>;

export default function App() {
  return (
    <Desktop>
      <Global />
      <Header>
        <QuickBar>
          <Logo aria-label="TOTVS"><Icon name="swirl" /></Logo>
          <QuickLine />
          <QuickMenu aria-label="Módulos"><Icon name="cubes" /><Chevron /></QuickMenu>
          <Quick aria-label="Visualizar"><Icon name="winEye" /></Quick>
          <QuickMenu aria-label="Atualizar"><Icon name="winRef" /><Chevron /></QuickMenu>
          <QuickMenu aria-label="Início"><Icon name="home" /><Chevron /></QuickMenu>
          <Quick aria-label="Painéis"><Icon name="tiles" /></Quick>
          <Quick aria-label="Portal"><Icon name="globe" /></Quick>
          <Quick aria-label="Janela"><Icon name="winCfg" /></Quick>
          <Spacer />
          <CaptionSet>
            <Caption aria-label="Minimizar"><Icon name="winMin" /></Caption>
            <Caption aria-label="Restaurar"><Icon name="winRestore" /></Caption>
            <Caption aria-label="Fechar"><Icon name="winClose" /></Caption>
          </CaptionSet>
        </QuickBar>
        <RibbonTabs>
          <AppMenu aria-label="Menu"><Icon name="stack" /></AppMenu>
          <RibbonTab>Administração de Pessoal</RibbonTab>
          <RibbonTab $on>Folha Mensal</RibbonTab>
          <Spacer />
          <TabTools>
            <Icon name="collapse" /><Icon name="globe" />
            <QuickMenu aria-label="Painel"><Icon name="panel" /><Chevron /></QuickMenu>
            <Icon name="help" />
          </TabTools>
        </RibbonTabs>
      </Header>

      <Ribbon>
        <RibbonGroup>
          <RibbonButton $w={79}>
            <svg width="32" height="32" viewBox="0 0 32 32" aria-hidden="true">
              <path d="M10 2h19V22" fill="#fff" stroke={slate} strokeWidth="2" />
              <path d="M20 7h5M21 11h4M21 15h4" stroke={teal} strokeWidth="1.600" />
              <path d="M2 28c0-6 4-8 9-9h4c4 1 6 2 7 5l-2 4z" fill="#fff" stroke={slate} strokeWidth="2" />
              <circle cx="13" cy="12" r="7" fill="#fff" stroke={slate} strokeWidth="2" />
              <circle cx="24" cy="24" r="7" fill="#0d97c0" />
              <path d="M26.500 22c-1-1.700-5-1.500-4.500.5s4.500 1 4.500 3-4 2-5 0M24 19v10" fill="none" stroke="#fff" strokeWidth="1.300" />
            </svg>
            <span>Entrada do</span><Inline>Movimento <Chevron color="#555" /></Inline>
          </RibbonButton>
        </RibbonGroup>
        <RibbonLine />
        <RibbonGroup>
          <RibbonButton $w={80}>
            <svg width="32" height="32" viewBox="0 0 32 32" aria-hidden="true">
              <path d="M5 2.500h11l7 7V27H5z" fill="#fff" stroke={slate} strokeWidth="2" />
              <path d="M16 3v7h7" fill="none" stroke={slate} strokeWidth="2" />
              <path d="M8 6h6M8 24h6M8 20h3" stroke={slate} strokeWidth="1.800" />
              <circle cx="12" cy="14" r="4" fill="#fff" stroke={teal} strokeWidth="1.400" />
              <path d="M13.500 12.500c-2-1-3.500.5-1.500 1.500s1 2.500-1.500 1.500" fill="none" stroke={teal} />
              <circle cx="21.500" cy="23" r="6.500" fill="#0d97c0" />
              <path d="M21.500 27v-7.500M18.500 22.500l3-3 3 3" fill="none" stroke="#fff" strokeWidth="1.800" />
            </svg>
            <span>Lançamentos</span><Inline><Chevron color="#555" /></Inline>
          </RibbonButton>
        </RibbonGroup>
        <RibbonMore>
          <RibbonItem><Icon name="importar" />Importação</RibbonItem>
          <RibbonLabel>Processos</RibbonLabel>
        </RibbonMore>
      </Ribbon>

      <Workspace>
        <DocArea>
          <DocTabs>
            <DocTab $on>Funcionário - 03.9.0516<Icon name="boxClose" size={14} /></DocTab>
            <DocTab>Grupo de Eventos</DocTab>
          </DocTabs>
          <DocPanel>
            <MainTools>
              <Bar>{tools('plus pencil | refresh | first up down last | search')}<Counter>1/50</Counter></Bar>
            </MainTools>
            <AppTools>
              {appIcons.map((g, i) => <AppTool key={i} aria-label={`Atalho ${i + 1}`}><svg width="22" height="22" viewBox="0 0 22 22" aria-hidden="true">{g}</svg></AppTool>)}
            </AppTools>
            <LayoutBar h={26} />
            <GroupBar />
            <TableArea>
              <Grid cols={mainCols} rows={staff} />
              <MainScroll>
                <ScrollKey $v aria-label="Acima"><Arrow $to="up" /></ScrollKey>
                <VThumb $h={38} />
                <ScrollKey $v aria-label="Abaixo"><Arrow $to="down" /></ScrollKey>
              </MainScroll>
            </TableArea>
            <GridFoot $h={38}><Total>0</Total></GridFoot>
            <HScroll>
              <ScrollKey aria-label="Esquerda"><Arrow $to="left" /></ScrollKey><HThumb /><ScrollKey aria-label="Direita"><Arrow $to="right" /></ScrollKey>
            </HScroll>
          </DocPanel>
        </DocArea>
        <SideTabs>
          <SideTab $h={77}><Icon name="exec" />Executar</SideTab>
          <SideTab $h={159}><Icon name="share" />TOTVS Compartilhamento</SideTab>
        </SideTabs>
      </Workspace>
      <BottomTabs>
        <BottomTab $w={69}><Icon name="monitor" />Sistema</BottomTab>
        <BottomTab $w={86}><Icon name="message" />Mensagens</BottomTab>
        <BottomTab $w={277}><Icon name="payroll" />Folha de Pagamento</BottomTab>
      </BottomTabs>
      <Taskbar>
        <TaskSearch />
        <TaskApps>
          {['#e0c060', '#c94434', '#c9893c', '#4a9a68', '#1e6d92', '#1c2e86', '#2c3fc0', '#777', '#777'].map((c, i) => <TaskApp key={i} $c={c} />)}
        </TaskApps>
        <TaskText>POR</TaskText><TaskText>10:48</TaskText>
      </Taskbar>

      <Win $x={230} $y={5} $w={906} $h={717} $z={1}>
        <WinInner>
          <WinHead title="Funcionário: 00001 - ITAMAR MENDES DA SILVEIRA - 03.9.0516" />
          <Bar $tall>
            {tools('plus | refresh | first up down last | search')}<Counter>1/50</Counter><ToolLine />
            <MenuButton icon="clip" label="Anexos" /><MenuButton icon="gear" label="Processos" />
          </Bar>
          <WinBody>
            <Nav>
              {navGroups.map(([title, items]) => (
                <NavGroup key={title}>
                  <NavTitle>
                    <NavTitleText>{title}</NavTitleText>
                    <Puck><svg width="16" height="16" viewBox="0 0 16 16" aria-hidden="true"><path d="M5 7.500l3-3 3 3M5 11.500l3-3 3 3" stroke="#000" strokeWidth="1.400" fill="none" /></svg></Puck>
                  </NavTitle>
                  <NavList>
                    {items.map(t => <NavItem key={t}><NavLink href="#" $on={t === 'Empréstimos'}>{t}</NavLink></NavItem>)}
                  </NavList>
                </NavGroup>
              ))}
            </Nav>
            <NavScroll>
              <ScrollKey $v aria-label="Acima"><Arrow $to="up" /></ScrollKey>
              <VThumb $h={380} />
              <ScrollKey $v aria-label="Abaixo"><Arrow $to="down" /></ScrollKey>
            </NavScroll>
            <Side>
              <Field>
                <Legend>Empréstimos</Legend>
                <FieldGrid>
                  <Bar>
                    {tools('plus pencil del | refresh | first up down last | search')}<Counter>1/3</Counter>{tools('columns |')}
                    <Dropdown icon="export" />{tools('report |')}<Dropdown icon="gear" /><ToolLine /><Dropdown icon="filter" />
                  </Bar>
                  <LayoutBar />
                  <GroupBar />
                  <TableArea><Grid cols={loanCols} rows={loans} /></TableArea>
                  <PlainFoot><ScrollKey aria-label="Direita"><Arrow $to="right" /></ScrollKey></PlainFoot>
                </FieldGrid>
              </Field>
              <Actions><Save>Salvar</Save></Actions>
            </Side>
          </WinBody>
        </WinInner>
      </Win>

      <Win $x={444} $y={240} $w={603} $h={490} $z={2}>
        <WinInner>
          <WinHead active title="Empréstimos: 1 - 00001" />
          <Bar $tall>
            {tools('plus del | refresh | first up down last | search')}<Counter>1/3</Counter><ToolLine />
            <MenuButton icon="clip" label="Anexos" on /><MenuButton icon="gear" label="Processos" />
          </Bar>
          <TabPad>
            <TabRow>
              <PageTab $w={93}>Identificação</PageTab>
              <PageTab $w={190}>Descontos de Empréstimos</PageTab>
            </TabRow>
            <TabPage>
              <GridBox>
                <Bar>{tools('plus pencilOff delOff | refresh | first up downOff lastOff | searchOff')}<Counter>0/0</Counter></Bar>
                <LayoutBar />
                <GroupBar />
                <TableArea><DiscountHolder><Grid plain cols={discountCols} rows={[]} /></DiscountHolder></TableArea>
                <GridFoot $h={37}><Total>0</Total></GridFoot>
                <FootScroll>
                  <HScroll>
                    <ScrollKey aria-label="Esquerda"><Arrow $to="left" /></ScrollKey><HThumb $w={377} /><ScrollKey aria-label="Direita"><Arrow $to="right" /></ScrollKey>
                  </HScroll>
                </FootScroll>
              </GridBox>
            </TabPage>
          </TabPad>
        </WinInner>
      </Win>

      <Mark $x={548} $y={299} $w={143} $h={32} $z={5} />
      <Menu>
        {menuItems.map(([icon, label]) => (
          <li key={label}><MenuItem><MenuIcon><Icon name={icon} /></MenuIcon><MenuText>{label}</MenuText><Arrow $to="right" $c="#000" /></MenuItem></li>
        ))}
        <MenuRule />
        <PlainItem>Descontos de Empréstimos</PlainItem>
        <MenuRule />
        <PlainItem>Configurar Anexos</PlainItem>
        <MenuRule />
        <PlainItem>Fechar Anexo</PlainItem>
        <PlainItem>Fechar Todos os Anexos</PlainItem>
      </Menu>
      <Mark $x={690} $y={263} $w={98} $h={39} $z={7} />
      <Mark $x={691} $y={448} $w={211} $h={46} $z={7} />
      <Cursor width="14" height="21" viewBox="0 0 14 21" aria-hidden="true">
        <path d="M1 1v15l3.500-3.300L7 18.500l2.500-1-2.500-5.500h5z" fill="#fff" stroke="#222" strokeWidth="1" />
      </Cursor>
    </Desktop>
  );
}
